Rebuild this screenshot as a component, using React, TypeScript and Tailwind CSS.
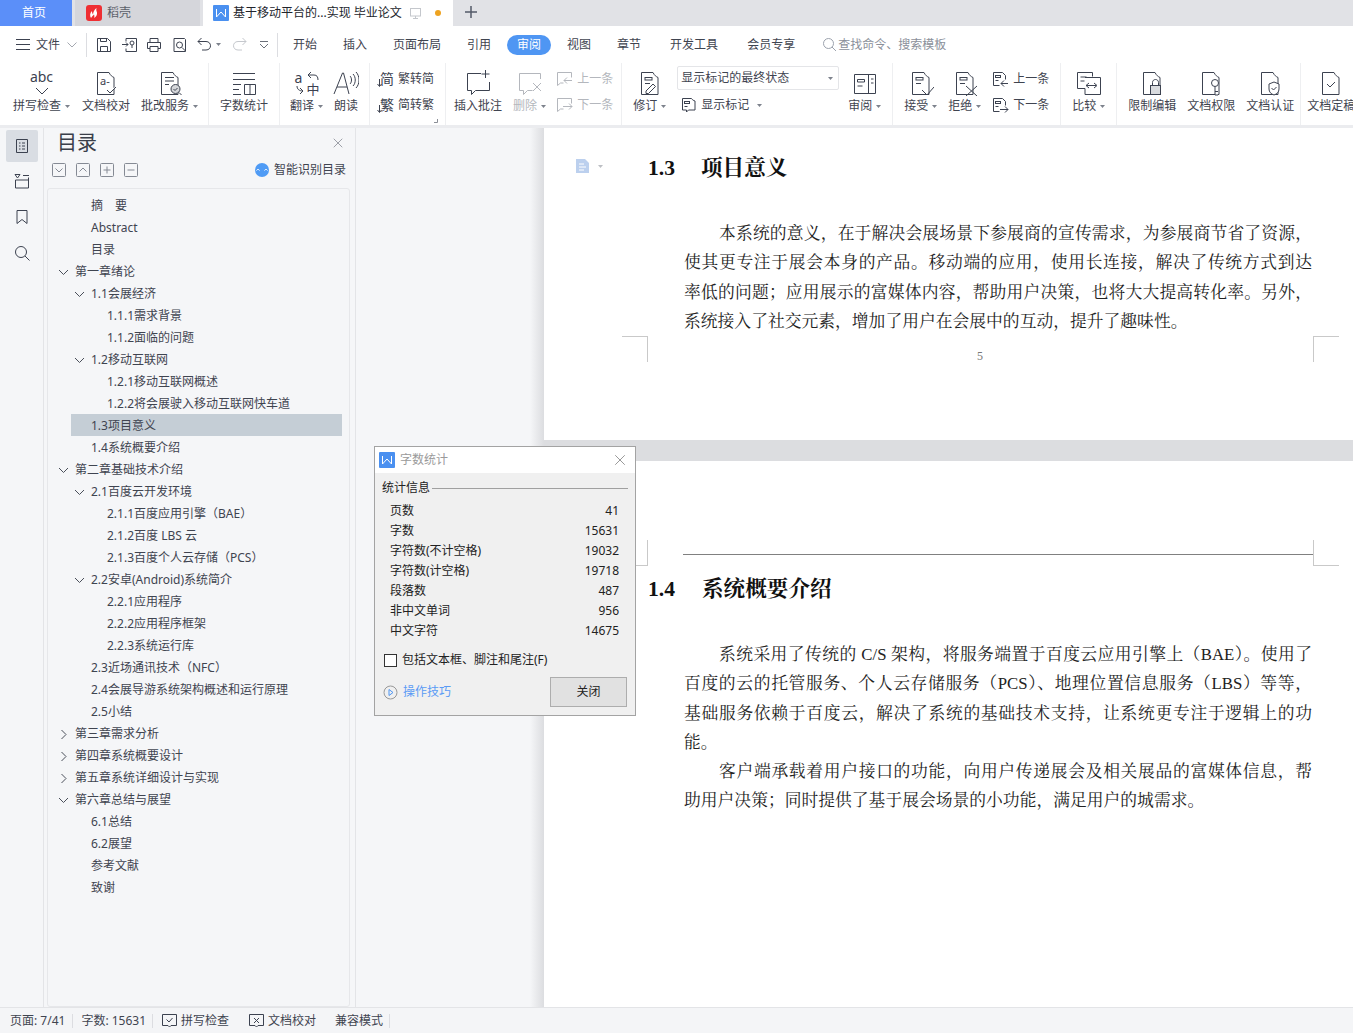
import type { ReactNode } from 'react'
import { X } from 'lucide-react'

const INK = '#3c4250'
const MUTED = '#b4b7bd'

function Svg({ size = 26, box, color = INK, children }: { size?: number; box?: string; color?: string; children: ReactNode }) {
  return (
    <svg width={size} height={size} viewBox={box ?? `0 0 ${size} ${size}`} fill="none" stroke={color} strokeWidth={1} className="shrink-0">
      {children}
    </svg>
  )
}

function Caret({ color = '#7d828c' }: { color?: string }) {
  return (
    <svg width="5" height="3" viewBox="0 0 5 3" className="ml-[4px] shrink-0">
      <path d="M0 0h5L2.5 3z" fill={color} />
    </svg>
  )
}

function Sep({ className = '' }: { className?: string }) {
  return <div className={`w-px h-[62px] bg-[#eeeff1] shrink-0 -mt-[5px] ${className}`} />
}

function Big({ icon, label, caret, muted, className = '' }: { icon: ReactNode; label: string; caret?: boolean; muted?: boolean; className?: string }) {
  return (
    <div className={`flex flex-col items-center shrink-0 ${className}`}>
      <div className="h-[29px] flex items-center justify-center">{icon}</div>
      <div className={`h-[18px] flex items-center text-[12px] whitespace-nowrap ${muted ? 'text-[#b4b7bd]' : 'text-[#3f4450]'}`}>
        {label}
        {caret && <Caret />}
      </div>
    </div>
  )
}

function Small({ icon, label, muted, caret }: { icon: ReactNode; label: string; muted?: boolean; caret?: boolean }) {
  return (
    <div className={`flex items-center gap-[4px] h-[20px] text-[12px] whitespace-nowrap ${muted ? 'text-[#b4b7bd]' : 'text-[#3f4450]'}`}>
      {icon}
      {label}
      {caret && <Caret />}
    </div>
  )
}

const docPath = 'M4.5 2.5h11.5c1.5 3 3 4 5 5v17h-16.500z'

function DocIcon({ children }: { children?: ReactNode }) {
  return (
    <Svg>
      <path d={docPath} />
      {children}
    </Svg>
  )
}

function Marks() {
  return (
    <>
      <rect x="8" y="7.500" width="7" height="2.500" />
      <path d="M8 13.500h5" />
    </>
  )
}

function SmallDoc({ arrow, color = INK }: { arrow: 'left' | 'right'; color?: string }) {
  return (
    <Svg size={17} color={color}>
      <path d="M1.500 1.500h9l3 3v4M1.500 1.500v13h6" />
      <rect x="3.500" y="4.500" width="5" height="2" />
      <path d="M3.500 9.500h3" />
      {arrow === 'left' ? <path d="M16 12.500H9m3-3l-3 3 3 3" /> : <path d="M8 12.500h8m-3-3l3 3-3 3" />}
    </Svg>
  )
}

function CommentNav({ arrow, color = MUTED }: { arrow: 'left' | 'right'; color?: string }) {
  return (
    <Svg size={17} color={color}>
      <path d="M1.500 1.500h14v5M1.500 1.500v13l3-2.500h3" />
      {arrow === 'left' ? <path d="M16 9.500H8m3-3l-3 3 3 3" /> : <path d="M7 9.500h9m-3-3l3 3-3 3" />}
    </Svg>
  )
}

function CharConvert({ ch }: { ch: string }) {
  return (
    <span className="relative w-[17px] h-[17px] text-[14px] leading-[16px] text-[#3c4250] text-right shrink-0">
      {ch}
      <svg width="6" height="9" viewBox="0 0 6 9" fill="none" stroke={INK} className="absolute left-0 bottom-0">
        <path d="M2.500 0v7M.5 5l2 2.500 2-2.500" />
      </svg>
    </span>
  )
}

function MenuItem({ label, className = '' }: { label: string; className?: string }) {
  return <span className={`text-[12px] text-[#3f4450] whitespace-nowrap ${className}`}>{label}</span>
}

function WLogo({ size = 16 }: { size?: number }) {
  return (
    <svg width={size} height={size} viewBox="0 0 16 16" className="shrink-0">
      <rect width="16" height="16" rx="1" fill="#4a90f0" />
      <path d="M3.500 4v8l4.500-5 4.500 5V4" fill="none" stroke="#fff" strokeWidth="1" />
    </svg>
  )
}

function TabBar() {
  return (
    <div className="h-[26px] bg-[#e1e2e6] flex text-[12px] shrink-0">
      <div className="w-[72px] pr-[4px] bg-[#5b8ff9] text-white flex items-center justify-center">首页</div>
      <div className="w-[125px] ml-[3px] bg-[#d5d6db] flex items-center pl-[11px] gap-[5px] text-[#5c606a]">
        <svg width="16" height="16" viewBox="0 0 16 16">
          <rect width="16" height="16" rx="3" fill="#ef2f33" />
          <path d="M5 13c-1.500-2.500-1-5 1-7 0 2 .5 2.500 1 3.500C7 7 8.500 4.500 10.500 3c-.5 2.500 0 3 .5 4.500.5 2-1 4.500-3 5.500.5-1 .5-2.500 0-3.500-1 1-2 2-3 3.500z" fill="#fff" />
        </svg>
        稻壳
      </div>
      <div className="w-[250px] ml-[3px] bg-white flex items-center pl-[10px] text-[#22252c]">
        <WLogo />
        <span className="ml-[4px] whitespace-nowrap">基于移动平台的...实现 毕业论文</span>
        <svg width="13" height="13" viewBox="0 0 13 13" fill="none" stroke="#c4c7cc" className="ml-[7px]">
          <rect x="1.500" y="1.500" width="10" height="7.500" />
          <path d="M6.500 9v2.500M4 11.500h5" />
        </svg>
        <span className="w-[6px] h-[6px] rounded-full bg-[#eea320] ml-[13px]" />
      </div>
      <svg width="14" height="14" viewBox="0 0 14 14" fill="none" stroke="#535a68" strokeWidth="1.500" className="ml-[11px] mt-[5px]">
        <path d="M7 1v12M1 7h12" />
      </svg>
    </div>
  )
}

function MenuBar() {
  return (
    <div className="h-[37px] bg-white flex items-center shrink-0 pl-[16px]">
      <svg width="14" height="11" viewBox="0 0 14 11" fill="none" stroke={INK}>
        <path d="M0 .5h14M0 5.500h14M0 10.500h14" />
      </svg>
      <MenuItem label="文件" className="ml-[6px]" />
      <svg width="10" height="6" viewBox="0 0 10 6" fill="none" stroke="#a4a8b0" className="ml-[7px]">
        <path d="M.5.500L5 5 9.500.500" />
      </svg>
      <div className="w-px h-[24px] bg-[#dcdde1] ml-[9px]" />
      <div className="ml-[9px]">
        <Svg size={16}>
          <path d="M1.500 1.500h10l3 3v10h-13zM4.500 1.500v3h6v-3M4.500 14.500v-5h7v5" />
        </Svg>
      </div>
      <div className="ml-[10px]">
        <Svg size={16}>
          <path d="M4 1.500h10.500v13H4v-3M4 4.500v-3M0 7.500h6m-2-2l2 2-2 2" />
          <circle cx="10" cy="6" r="2" />
          <path d="M10 8v3" />
        </Svg>
      </div>
      <div className="ml-[8px]">
        <Svg size={16}>
          <path d="M4 5.500v-4h8v4M4 11.500H1.500v-6h13v6H12M4 9.500h8v5H4z" />
        </Svg>
      </div>
      <div className="ml-[10px]">
        <Svg size={16}>
          <path d="M2 1.500h10.500l1 1v12H2z" />
          <circle cx="7.500" cy="8" r="3" />
          <path d="M10 10.500l3.500 3.500" />
        </Svg>
      </div>
      <div className="ml-[9px]">
        <Svg size={15}>
          <path d="M4.500 1L1 4.500 4.500 8M1 4.500h8c6 0 6 8.500 0 8.500H5" />
        </Svg>
      </div>
      <Caret />
      <div className="ml-[11px]">
        <Svg size={15} color="#c5c8cd">
          <path d="M10.500 1L14 4.500 10.500 8M14 4.500H6c-6 0-6 8.500 0 8.500h4" />
        </Svg>
      </div>
      <svg width="10" height="8" viewBox="0 0 10 8" fill="none" stroke="#6b707a" className="ml-[12px]">
        <path d="M1 .5h8M1 3l4 4 4-4" />
      </svg>
      <div className="w-px h-[24px] bg-[#dcdde1] ml-[8px]" />
      <MenuItem label="开始" className="ml-[15px]" />
      <MenuItem label="插入" className="ml-[26px]" />
      <MenuItem label="页面布局" className="ml-[26px]" />
      <MenuItem label="引用" className="ml-[26px]" />
      <span className="ml-[16px] w-[44px] h-[20px] rounded-full bg-[#4f96f3] text-white text-[12px] flex items-center justify-center">审阅</span>
      <MenuItem label="视图" className="ml-[16px]" />
      <MenuItem label="章节" className="ml-[26px]" />
      <MenuItem label="开发工具" className="ml-[29px]" />
      <MenuItem label="会员专享" className="ml-[29px]" />
      <svg width="15" height="15" viewBox="0 0 15 15" fill="none" stroke="#9ca2ad" className="ml-[27px]">
        <circle cx="6.500" cy="6.500" r="5" />
        <path d="M10 10l4 4" />
      </svg>
      <span className="ml-[1px] text-[12px] text-[#8b909a] whitespace-nowrap">查找命令、搜索模板</span>
    </div>
  )
}

function Ribbon() {
  return (
    <div className="relative h-[62px] bg-white shrink-0 flex items-start gap-[11px] pl-[13px] pt-[5px] overflow-hidden">
      <Big
        caret
        label="拼写检查"
        icon={
          <span className="relative w-[26px] h-[26px] block text-center text-[14px] leading-[14px] text-[#3c4250]">
            abc
            <svg width="14" height="9" viewBox="0 0 14 9" fill="none" stroke={INK} className="absolute left-[6px] bottom-0">
              <path d="M1 1l6 6 6-6" />
            </svg>
          </span>
        }
      />
      <Big
        className="ml-[1px]"
        label="文档校对"
        icon={
          <DocIcon>
            <text x="7" y="15" fontSize="11" fill={INK} stroke="none">a-</text>
            <path d="M14 20l3 3 6-6" stroke={INK} fill="#fff" />
          </DocIcon>
        }
      />
      <Big
        caret
        label="批改服务"
        icon={
          <DocIcon>
            <path d="M8 7.500h9M8 11h9M8 14.500h4" />
            <circle cx="18.500" cy="19" r="4.500" fill="#d4d6da" />
            <path d="M16.500 19l1.500 1.500 2.500-2.500M22 22.500l2.500 2.500" />
          </DocIcon>
        }
      />
      <Sep className="-ml-[1px]" />
      <Big
        label="字数统计"
        icon={
          <Svg>
            <path d="M2 3.500h22M2 9.500h22M2 14.500h8M2 19.500h6M2 24.500h8M13.500 14.500h11v10h-11zM19 14.500v10" />
          </Svg>
        }
      />
      <Sep />
      <Big
        className="ml-[-1px]"
        caret
        label="翻译"
        icon={
          <span className="relative w-[26px] h-[26px] block text-[#3c4250] leading-none">
            <span className="absolute left-[1px] top-[1px] text-[14px] leading-none">a</span>
            <span className="absolute right-0 bottom-0 text-[13px] leading-none">中</span>
            <svg width="26" height="26" viewBox="0 0 26 26" fill="none" stroke={INK} className="absolute left-0 top-0">
              <path d="M14 5h6c3 0 4 2 4 5M17 2l-3 3 3 3M3 16c0 3 2 5 6 5M6 18l3 3-3 3" />
            </svg>
          </span>
        }
      />
      <Big
        className="ml-[-1px]"
        label="朗读"
        icon={
          <Svg>
            <path d="M1 24L9.500 3h1L16 24M4 17h10M17 6c2 2 2 6 0 8M20 4c3 3 3 9 0 12M23 2c4 4 4 12 0 16" />
          </Svg>
        }
      />
      <Sep className="-ml-[1px]" />
      <div className="flex flex-col gap-[6px] pt-[1px] -ml-[4px]">
        <Small icon={<CharConvert ch="简" />} label="繁转简" />
        <Small icon={<CharConvert ch="繁" />} label="简转繁" />
      </div>
      <Sep />
      <Big
        className="-ml-[3px]"
        label="插入批注"
        icon={
          <Svg>
            <path d="M16 3.500H2.500v17h4v4l4-4h14V12M20.500 0v8M16.500 4h8" />
          </Svg>
        }
      />
      <Big
        caret
        muted
        label="删除"
        icon={
          <Svg color={MUTED}>
            <path d="M23.500 9V3.500h-21v17h4v4l4-4h5M16 13l8 8M24 13l-8 8" />
          </Svg>
        }
      />
      <div className="flex flex-col gap-[6px] pt-[1px] -ml-[1px]">
        <Small icon={<CommentNav arrow="left" />} label="上一条" muted />
        <Small icon={<CommentNav arrow="right" />} label="下一条" muted />
      </div>
      <Sep className="-ml-[3px]" />
      <Big
        caret
        label="修订"
        icon={
          <DocIcon>
            <Marks />
            <path d="M9 21l7-7 2.500 2.500-7 7H9z" />
          </DocIcon>
        }
      />
      <div className="flex flex-col">
        <div className="w-[162px] h-[24px] -mt-[2px] border border-[#e4e5e8] rounded-[2px] flex items-center justify-between pl-[3px] pr-[5px] text-[12px] text-[#3f4450]">
          显示标记的最终状态
          <Caret />
        </div>
        <div className="mt-[5px] pl-[4px]">
          <Small
            caret
            label="显示标记"
            icon={
              <Svg size={16}>
                <path d="M1.500 1.500h9c1 1.500 2 2 3.500 2.500v9H7.500l-2 2v-2h-4z" />
                <rect x="3.500" y="4.500" width="5" height="2" />
                <path d="M3.500 9.500h3" />
              </Svg>
            }
          />
        </div>
      </div>
      <Big
        className="-ml-[2px]"
        caret
        label="审阅"
        icon={
          <Svg>
            <path d="M2.500 4.500h21v19h-21zM16.500 4.500v19M5.500 9.500h7v2.500h-7zM5.500 16h5M19 9h2.500M19 13h2.500" />
          </Svg>
        }
      />
      <Sep />
      <Big
        caret
        label="接受"
        icon={
          <DocIcon>
            <Marks />
            <path d="M14 20l5 5 7-8" stroke={INK} />
          </DocIcon>
        }
      />
      <Big
        caret
        label="拒绝"
        icon={
          <DocIcon>
            <Marks />
            <path d="M14 16l11 10M25 16L14 26" />
          </DocIcon>
        }
      />
      <div className="flex flex-col gap-[6px] pt-[1px]">
        <Small icon={<SmallDoc arrow="left" />} label="上一条" />
        <Small icon={<SmallDoc arrow="right" />} label="下一条" />
      </div>
      <Sep />
      <Big
        caret
        label="比较"
        icon={
          <Svg>
            <path d="M1.500 2.500h15v4M1.500 2.500v16H9M9 7.500h15.500v17H9v-6M4.500 7h6M4.500 11h4M10 15.500h10m-2-2.500l3 2.500-3 2.500M13 13l-3 2.500 3 2.500" />
          </Svg>
        }
      />
      <Sep />
      <Big
        label="限制编辑"
        icon={
          <DocIcon>
            <rect x="11.500" y="15.500" width="10" height="9" fill="#d9dbde" stroke={INK} />
            <path d="M13.500 15.500v-3c0-4 6-4 6 0v3" />
          </DocIcon>
        }
      />
      <Big
        label="文档权限"
        icon={
          <DocIcon>
            <circle cx="17" cy="13" r="3.500" fill="#fff" />
            <path d="M17 16.500v8.500h3M17 21.500h3" fill="#fff" />
          </DocIcon>
        }
      />
      <Big
        label="文档认证"
        icon={
          <DocIcon>
            <path d="M17 12l5 2v5c0 3-2 5-5 6-3-1-5-3-5-6v-5z" fill="#fff" />
            <path d="M14.500 18l2 2 3-3" />
          </DocIcon>
        }
      />
      <Sep className="-mx-[5px]" />
      <Big
        label="文档定稿"
        icon={
          <DocIcon>
            <path d="M9 14l3 3 5-5" />
          </DocIcon>
        }
      />
      <svg width="4" height="4" viewBox="0 0 4 4" fill="none" stroke="#8b8f97" className="absolute left-[434px] top-[56px]">
        <path d="M3.500 0v3.500H0" />
      </svg>
    </div>
  )
}

function Rail() {
  return (
    <div className="w-[44px] shrink-0 bg-[#f5f6f8] border-r border-[#e3e4e7] flex flex-col items-start pl-[6px] pt-[2px]">
      <div className="w-[32px] h-[32px] rounded-[2px] bg-[#d9dde3] flex items-center justify-center">
        <Svg size={16}>
          <path d="M2.500 1.500h11v13h-11zM5 5h1.500M5 8h1.500M5 11h1.500M8 5h3M8 8h3M8 11h3" />
        </Svg>
      </div>
      <div className="w-[32px] flex justify-center mt-[11px]">
        <Svg size={16}>
          <path d="M1 1.500h5L3.500 5zM9 2.500h6M1.500 7v8h13V4.500M1.500 7h13" />
        </Svg>
      </div>
      <div className="w-[32px] flex justify-center mt-[20px]">
        <Svg size={16}>
          <path d="M3 1.500h10v13l-5-4-5 4z" />
        </Svg>
      </div>
      <div className="w-[32px] flex justify-center mt-[20px]">
        <Svg size={16}>
          <circle cx="7" cy="7" r="5.500" />
          <path d="M11 11l4.500 4.500" />
        </Svg>
      </div>
    </div>
  )
}

type TocRow = { lv: 0 | 1 | 2; text: string; fold?: 'open' | 'closed'; active?: boolean }

const TOC: TocRow[] = [
  { lv: 1, text: '摘　要' },
  { lv: 1, text: 'Abstract' },
  { lv: 1, text: '目录' },
  { lv: 0, text: '第一章绪论', fold: 'open' },
  { lv: 1, text: '1.1会展经济', fold: 'open' },
  { lv: 2, text: '1.1.1需求背景' },
  { lv: 2, text: '1.1.2面临的问题' },
  { lv: 1, text: '1.2移动互联网', fold: 'open' },
  { lv: 2, text: '1.2.1移动互联网概述' },
  { lv: 2, text: '1.2.2将会展驶入移动互联网快车道' },
  { lv: 1, text: '1.3项目意义', active: true },
  { lv: 1, text: '1.4系统概要介绍' },
  { lv: 0, text: '第二章基础技术介绍', fold: 'open' },
  { lv: 1, text: '2.1百度云开发环境', fold: 'open' },
  { lv: 2, text: '2.1.1百度应用引擎（BAE）' },
  { lv: 2, text: '2.1.2百度 LBS 云' },
  { lv: 2, text: '2.1.3百度个人云存储（PCS）' },
  { lv: 1, text: '2.2安卓(Android)系统简介', fold: 'open' },
  { lv: 2, text: '2.2.1应用程序' },
  { lv: 2, text: '2.2.2应用程序框架' },
  { lv: 2, text: '2.2.3系统运行库' },
  { lv: 1, text: '2.3近场通讯技术（NFC）' },
  { lv: 1, text: '2.4会展导游系统架构概述和运行原理' },
  { lv: 1, text: '2.5小结' },
  { lv: 0, text: '第三章需求分析', fold: 'closed' },
  { lv: 0, text: '第四章系统概要设计', fold: 'closed' },
  { lv: 0, text: '第五章系统详细设计与实现', fold: 'closed' },
  { lv: 0, text: '第六章总结与展望', fold: 'open' },
  { lv: 1, text: '6.1总结' },
  { lv: 1, text: '6.2展望' },
  { lv: 1, text: '参考文献' },
  { lv: 1, text: '致谢' },
]

const INDENT = { 0: 'pl-[11px]', 1: 'pl-[27px]', 2: 'pl-[43px]' }

function TreeRow({ row }: { row: TocRow }) {
  const base = 'flex items-center h-[22px] pt-[2px] text-[12px] text-[#3f4450] whitespace-nowrap'
  if (row.active) {
    return (
      <div className={`${base} ml-[23px] mr-[7px] pl-[20px] bg-[#c5ced6]`}>{row.text}</div>
    )
  }
  return (
    <div className={`${base} ${INDENT[row.lv]}`}>
      <span className="w-[16px] shrink-0 -ml-[1px] mr-[1px]">
        {row.fold === 'open' && (
          <svg width="11" height="7" viewBox="0 0 11 7" fill="none" stroke="#4a4f5a">
            <path d="M1 1l4.500 4.500L10 1" />
          </svg>
        )}
        {row.fold === 'closed' && (
          <svg width="11" height="11" viewBox="0 0 11 11" fill="none" stroke="#4a4f5a">
            <path d="M3.500 1l4.500 4.500L3.500 10" />
          </svg>
        )}
      </span>
      {row.text}
    </div>
  )
}

function ToolBox({ children }: { children: ReactNode }) {
  return (
    <svg width="14" height="14" viewBox="0 0 14 14" fill="none" stroke="#858a94" className="shrink-0">
      <rect x=".5" y=".5" width="13" height="13" rx="1" />
      {children}
    </svg>
  )
}

function TocPanel() {
  return (
    <div className="w-[312px] shrink-0 bg-[#f5f6f8] border-r border-[#e3e4e7] flex flex-col pl-[3px]">
      <div className="flex items-center justify-between h-[30px] pl-[10px] pr-[9px] shrink-0">
        <span className="text-[20px] text-[#3a3f4a] leading-[30px]">目录</span>
        <X size={16} strokeWidth={1} color="#6f747e" />
      </div>
      <div className="flex items-center h-[22px] mt-[1px] pl-[5px] pr-[9px] shrink-0">
        <div className="flex gap-[10px]">
          <ToolBox><path d="M3.500 5.500L7 9l3.500-3.500" /></ToolBox>
          <ToolBox><path d="M3.500 8.500L7 5l3.500 3.500" /></ToolBox>
          <ToolBox><path d="M3.500 7h7M7 3.500v7" /></ToolBox>
          <ToolBox><path d="M3.500 7h7" /></ToolBox>
        </div>
        <div className="ml-auto flex items-center gap-[5px] text-[12px] text-[#3f4450]">
          <svg width="14" height="14" viewBox="0 0 14 14">
            <circle cx="7" cy="7" r="7" fill="#4f9bf5" />
            <path d="M1.500 7.500c1-1.500 2-1.500 3 0M9.500 7.500c1-1.500 2-1.500 3 0" fill="none" stroke="#fff" />
          </svg>
          智能识别目录
        </div>
      </div>
      <div className="flex-1 mt-[7px] w-[303px] border border-[#e6e7ea] rounded-[3px] pt-[5px] overflow-hidden">
        {TOC.map((row) => (
          <TreeRow key={row.text} row={row} />
        ))}
      </div>
    </div>
  )
}

function Line({ text, last, first }: { text: string; last?: boolean; first?: boolean }) {
  return (
    <div className={`h-[29.3px] leading-[29.3px] whitespace-nowrap ${first ? 'pl-[35px]' : ''} ${last ? '' : '[text-align-last:justify]'}`}>
      {text}
    </div>
  )
}

function Crop({ className }: { className: string }) {
  return <div className={`absolute w-[26px] h-[26px] border-[#c9c9c9] ${className}`} />
}

const heading = "text-[21.600px] leading-[30px] font-bold text-[#111] ml-[104px] flex font-['Liberation_Serif','Noto_Serif_CJK_SC','Noto_Sans_CJK_SC',serif]"
const body = "ml-[140px] w-[628px] text-[16.800px] text-[#222] font-['Liberation_Serif','Noto_Serif_CJK_SC','Noto_Sans_CJK_SC',serif]"

function Pages() {
  return (
    <div className="flex-1 flex flex-col min-w-0">
      <div className="relative h-[312px] bg-white shrink-0 pt-[25px] overflow-hidden">
        <div className="absolute left-[32px] top-[31px] flex items-center gap-[4px]">
          <svg width="14" height="14" viewBox="0 0 14 14">
            <path d="M0 0h9l4 4v10H0z" fill="#bcd0ee" />
            <path d="M3 5h5M3 8h7M3 11h5" stroke="#fff" />
          </svg>
          <Caret color="#bdbfc4" />
        </div>
        <div className={heading}>
          <span className="w-[53px]">1.3</span>项目意义
        </div>
        <div className={`${body} mt-[36px]`}>
          <Line first text="本系统的意义，在于解决会展场景下参展商的宣传需求，为参展商节省了资源，" />
          <Line text="使其更专注于展会本身的产品。移动端的应用，使用长连接，解决了传统方式到达" />
          <Line text="率低的问题；应用展示的富媒体内容，帮助用户决策，也将大大提高转化率。另外，" />
          <Line last text="系统接入了社交元素，增加了用户在会展中的互动，提升了趣味性。" />
        </div>
        <Crop className="left-[78px] top-[208px] border-t border-r" />
        <Crop className="left-[769px] top-[208px] border-t border-l" />
        <div className="absolute left-[433px] top-[219px] text-[12px] text-[#777] font-['Liberation_Serif',serif]">5</div>
      </div>
      <div className="h-[21px] bg-[#dcdde0] shrink-0" />
      <div className="relative flex-1 bg-white overflow-hidden">
        <Crop className="left-[78px] top-[79px] border-b border-r" />
        <Crop className="left-[769px] top-[79px] border-b border-l" />
        <div className="h-px w-[630px] ml-[139px] mt-[93px] bg-[#808080]" />
        <div className={`${heading} mt-[19px]`}>
          <span className="w-[54px]">1.4</span>系统概要介绍
        </div>
        <div className={`${body} mt-[36px]`}>
          <Line first text="系统采用了传统的 C/S 架构，将服务端置于百度云应用引擎上（BAE）。使用了" />
          <Line text="百度的云的托管服务、个人云存储服务（PCS）、地理位置信息服务（LBS）等等，" />
          <Line text="基础服务依赖于百度云，解决了系统的基础技术支持，让系统更专注于逻辑上的功" />
          <Line last text="能。" />
          <Line first text="客户端承载着用户接口的功能，向用户传递展会及相关展品的富媒体信息，帮" />
          <Line last text="助用户决策；同时提供了基于展会场景的小功能，满足用户的城需求。" />
        </div>
      </div>
    </div>
  )
}

const STATS = [
  ['页数', '41'],
  ['字数', '15631'],
  ['字符数(不计空格)', '19032'],
  ['字符数(计空格)', '19718'],
  ['段落数', '487'],
  ['非中文单词', '956'],
  ['中文字符', '14675'],
]

function WordCountDialog() {
  return (
    <div className="absolute left-[374px] top-[446px] w-[262px] h-[270px] border border-[#a3a3a3] bg-[#f0f0f0] flex flex-col text-[12px] text-[#222]">
      <div className="h-[26px] bg-white flex items-center pl-[4px] pr-[6px] shrink-0">
        <WLogo />
        <span className="ml-[5px] text-[#9a9a9a]">字数统计</span>
        <X size={18} strokeWidth={1} color="#777" className="ml-auto" />
      </div>
      <div className="flex items-center mt-[6px] pl-[7px] pr-[7px] h-[18px]">
        统计信息
        <span className="flex-1 h-px bg-[#a0a0a0] ml-[2px]" />
      </div>
      <div className="mt-[4px] pl-[15px] pr-[16px]">
        {STATS.map(([k, v]) => (
          <div key={k} className="flex justify-between items-center h-[20px]">
            <span>{k}</span>
            <span>{v}</span>
          </div>
        ))}
      </div>
      <div className="flex items-center mt-[10px] pl-[9px]">
        <span className="w-[13px] h-[13px] border border-[#333] bg-white mr-[5px]" />
        包括文本框、脚注和尾注(F)
      </div>
      <div className="flex items-center mt-[8px] pl-[8px] pr-[8px]">
        <svg width="15" height="15" viewBox="0 0 15 15" fill="none" stroke="#8aa4c8">
          <circle cx="7.500" cy="7.500" r="6.500" stroke="#999" />
          <path d="M6 4.500l4 3-4 3z" stroke="#4f96f3" />
        </svg>
        <span className="ml-[5px] text-[#5a9bf5]">操作技巧</span>
        <div className="ml-auto w-[77px] h-[30px] bg-[#e1e1e1] border border-[#adadad] flex items-center justify-center">关闭</div>
      </div>
    </div>
  )
}

function StatusBar() {
  return (
    <div className="h-[26px] shrink-0 bg-[#f4f5f7] border-t border-[#e3e4e7] flex items-center text-[12px] text-[#3f4450] pl-[10px] whitespace-nowrap">
      页面: 7/41
      <span className="w-px h-[14px] bg-[#dcdde1] ml-[7px] mr-[8px]" />
      字数: 15631
      <span className="w-px h-[14px] bg-[#dcdde1] ml-[6px] mr-[9px]" />
      <svg width="15" height="15" viewBox="0 0 15 15" fill="none" stroke={INK} className="mr-[4px]">
        <path d="M.5 1.500h14v11H9l-1.500 1.500L6 12.500H.5zM4.500 6.500l2.500 2.500 3.500-4" />
      </svg>
      拼写检查
      <svg width="15" height="15" viewBox="0 0 15 15" fill="none" stroke={INK} className="ml-[20px] mr-[4px]">
        <path d="M.5 1.500h14v11H9l-1.500 1.500L6 12.500H.5zM5 5l5 5M10 5l-5 5" />
      </svg>
      文档校对
      <span className="ml-[19px]">兼容模式</span>
      <span className="w-px h-[14px] bg-[#dcdde1] ml-[6px]" />
    </div>
  )
}

export default function App() {
  return (
    <div className="relative w-[1353px] h-[1033px] overflow-hidden flex flex-col bg-white font-['Noto_Sans','Noto_Sans_CJK_SC',sans-serif]">
      <TabBar />
      <MenuBar />
      <Ribbon />
      <div className="h-[3px] bg-[#ebecef] shrink-0" />
      <div className="flex-1 flex min-h-0">
        <Rail />
        <TocPanel />
        <div className="flex-1 flex bg-[#f5f6f8] min-w-0">
          <div className="w-[174px] shrink-0" />
          <div className="w-[14px] shrink-0 bg-gradient-to-r from-[#f5f6f8] to-[#dcdde0]" />
          <Pages />
        </div>
      </div>
      <StatusBar />
      <WordCountDialog />
    </div>
  )
}
